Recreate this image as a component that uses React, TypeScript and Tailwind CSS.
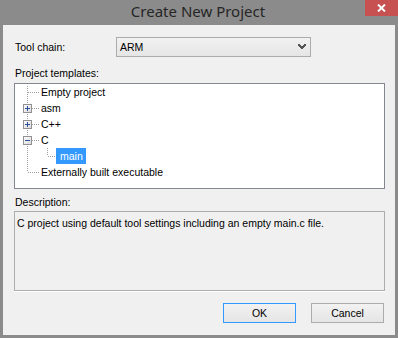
import React from 'react';

// Tree rows for the template picker
type Row = {
  label: string;
  box?: 'plus' | 'minus';
  child?: boolean;
  selected?: boolean;
};

const ROWS: Row[] = [
  { label: 'Empty project' },
  { label: 'asm', box: 'plus' },
  { label: 'C++', box: 'plus' },
  { label: 'C', box: 'minus' },
  { label: 'main', child: true, selected: true },
  { label: 'Externally built executable' },
];

const DOT = '#a0a0a0';

function Connector({ index, row }: { index: number; row: Row }) {
  const last = index === ROWS.length - 1;
  const width = row.child ? 41 : 26;
  const y1 = index === 0 ? 2 : 0;
  const y2 = last ? 8 : 16;
  return (
    <svg width={width} height={16} className="shrink-0" shapeRendering="crispEdges">
      <line x1={12.5} y1={y1} x2={12.5} y2={y2} stroke={DOT} strokeDasharray="1 1" />
      {row.child ? (
        <>
          <line x1={32.5} y1={0} x2={32.5} y2={8} stroke={DOT} strokeDasharray="1 1" />
          <line x1={33} y1={8.5} x2={41} y2={8.5} stroke={DOT} strokeDasharray="1 1" />
        </>
      ) : (
        <line x1={row.box ? 17 : 13} y1={8.5} x2={24} y2={8.5} stroke={DOT} strokeDasharray="1 1" />
      )}
      {row.box && (
        <>
          <defs>
            <linearGradient id={`bx${index}`} x1="0" y1="0" x2="1" y2="1">
              <stop offset="0" stopColor="#ffffff" />
              <stop offset="1" stopColor="#d8d8d8" />
            </linearGradient>
          </defs>
          <rect x={8.5} y={4.5} width={8} height={8} fill={`url(#bx${index})`} stroke="#919191" />
          <line x1={10} y1={8.5} x2={15} y2={8.5} stroke="#2f4d9e" />
          {row.box === 'plus' && <line x1={12.5} y1={6} x2={12.5} y2={11} stroke="#2f4d9e" />}
        </>
      )}
    </svg>
  );
}

export default function App() {
  return (
    <div
      className="w-[398px] h-[338px] bg-[#8b8b8b] flex flex-col text-[10.5px] text-black"
      style={{ fontFamily: '"Liberation Sans", Arial, sans-serif' }}
    >
      {/* title bar */}
      <div className="relative h-[25px] shrink-0 flex items-center justify-center">
        <span
          className="text-[15px] text-[#262626] leading-none -mt-[3px] -ml-[2px]"
          style={{ fontFamily: '"Noto Sans", "Open Sans", sans-serif' }}
        >
          Create New Project
        </span>
        <div className="absolute right-0 top-0 w-[33px] h-[16px] bg-[#c75050] flex items-center justify-center">
          <svg width="9" height="8" viewBox="0 0 9 8">
            <path d="M1 0.5 L8 7.5 M8 0.5 L1 7.5" stroke="#ffffff" strokeWidth="2" />
          </svg>
        </div>
      </div>

      {/* client area */}
      <div className="mx-[3px] h-[310px] bg-[#f0f0f0] flex flex-col pl-[11px] pr-[10px] pt-[12px]">
        <div className="flex items-center h-[20px]">
          <span className="ml-px w-[101px] leading-[14px]">Tool chain:</span>
          <div className="w-[195px] h-[20px] border border-[#acacac] bg-gradient-to-b from-[#f2f2f2] to-[#e5e5e5] flex items-center justify-between pl-[3px] pr-[4px]">
            <span className="leading-[14px]">ARM</span>
            <svg width="8" height="6" viewBox="0 0 8 6" shapeRendering="crispEdges">
              <path d="M0 0h2v1h1v1h2v-1h1v-1h2v2h-1v1h-1v1h-1v1h-2v-1h-1v-1h-1v-1h-1z" fill="#555555" />
            </svg>
          </div>
        </div>

        <div className="mt-[9px] h-[14px] leading-[14px] ml-px">Project templates:</div>
        <div className="mt-[3px] h-[106px] border border-[#828790] bg-white flex flex-col">
          {ROWS.map((row, i) => (
            <div key={row.label} className="flex items-center h-[16px] shrink-0">
              <Connector index={i} row={row} />
              {row.selected ? (
                <span className="h-[16px] bg-[#3399ff] text-white leading-[16px] pl-[4px] pr-[3px]">{row.label}</span>
              ) : (
                <span className="leading-[16px]">{row.label}</span>
              )}
            </div>
          ))}
        </div>

        <div className="mt-[6px] h-[14px] leading-[14px] ml-px">Description:</div>
        <div className="mt-[2px] h-[80px] border border-[#adadad] shadow-[0_1px_0_#ffffff] pl-[2px] pt-[4px]">
          <span className="leading-[14px]">C project using default tool settings including an empty main.c file.</span>
        </div>

        <div className="mt-[12px] flex justify-end gap-[15px] pr-[1px]">
          <button className="w-[73px] h-[20px] border border-[#3399ff] bg-gradient-to-b from-[#f2f2f2] to-[#e5e5e5] leading-[14px]">
            OK
          </button>
          <button className="w-[73px] h-[20px] border border-[#acacac] bg-gradient-to-b from-[#f2f2f2] to-[#e5e5e5] leading-[14px]">
            Cancel
          </button>
        </div>
      </div>
    </div>
  );
}
